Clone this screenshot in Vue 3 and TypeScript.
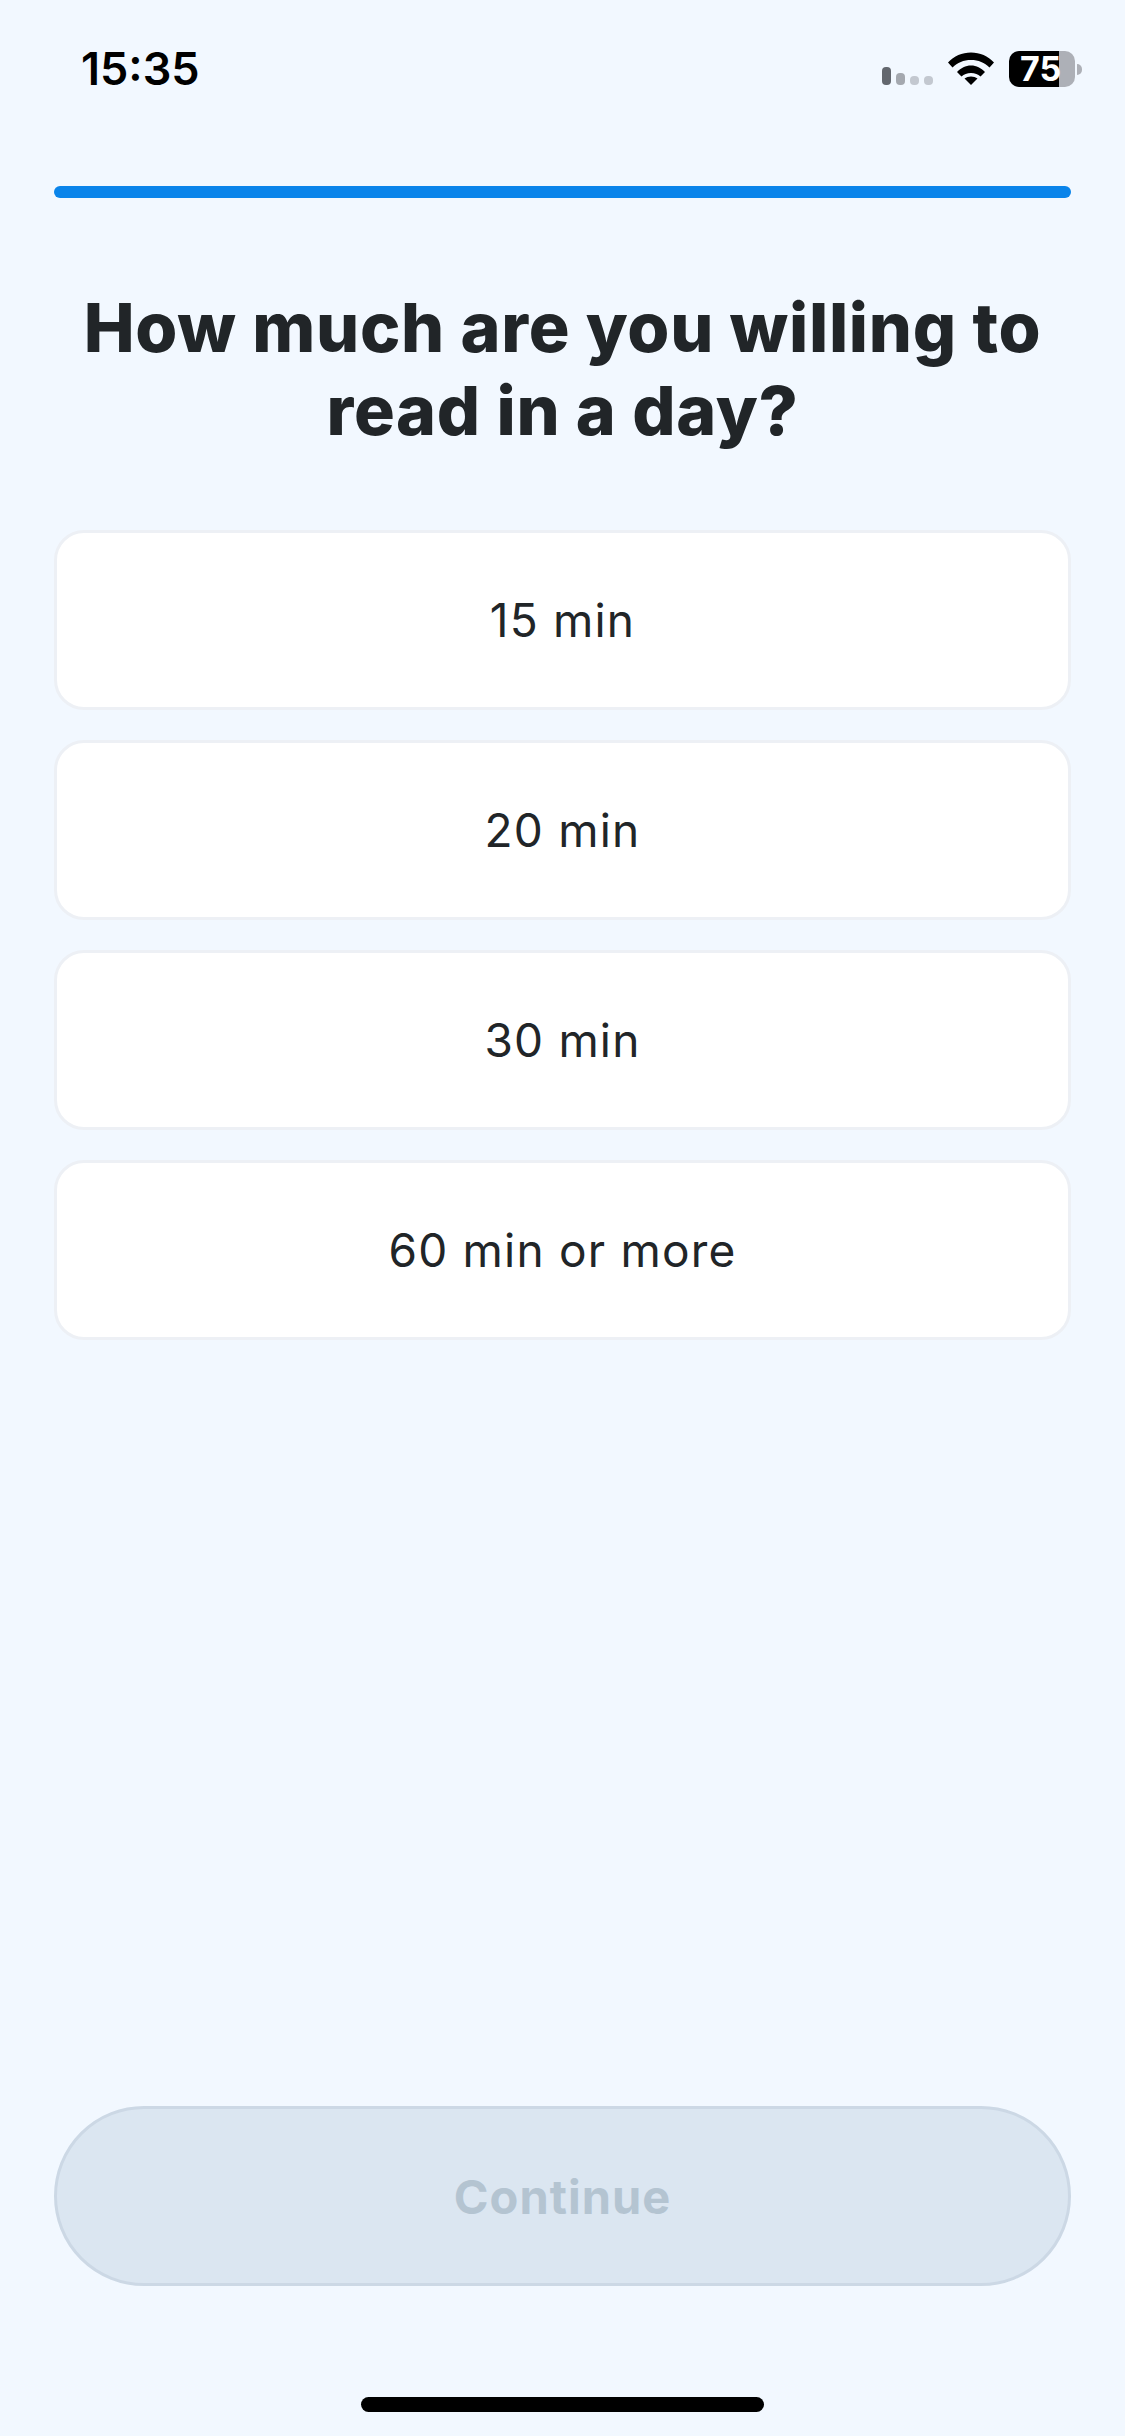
<script setup lang="ts">
const options = ["15 min", "20 min", "30 min", "60 min or more"];
</script>

<template>
  <div class="screen">
    <header class="status-bar">
      <span class="time">15:35</span>
      <div class="status-icons">
        <svg class="signal" width="51" height="18" viewBox="0 0 51 18">
          <rect x="0" y="0" width="9" height="18" rx="4" fill="#63676e" />
          <rect x="14" y="6" width="9" height="12" rx="4" fill="#a4a8af" />
          <rect x="28" y="9" width="9" height="9" rx="4" fill="#c3c8d0" />
          <rect x="42" y="9" width="9" height="9" rx="4" fill="#c3c8d0" />
        </svg>
        <svg class="wifi" width="46" height="33" viewBox="0 0 46 33">
          <path d="M0 10.500C6 4 14 0.500 23 0.500S40 4 46 10.500L41.500 15.500C36.500 10.500 30.500 8 23 8S9.500 10.500 4.500 15.500Z" fill="#000" />
          <path d="M9 20C13 16 17.500 13.500 23 13.500S33 16 37 20L32.500 24.500C30 22.300 27 21 23 21S16 22.300 13.500 24.500Z" fill="#000" />
          <path d="M16.500 26.500C18.300 25.200 20.500 24.500 23 24.500S27.700 25.200 29.500 26.500L23 33Z" fill="#000" />
        </svg>
        <div class="battery">
          <div class="battery-body">75</div>
          <span class="battery-nub"></span>
        </div>
      </div>
    </header>

    <main class="content">
      <div class="progress"></div>
      <h1 class="title">How much are you willing to read in a day?</h1>
      <div class="options">
        <button v-for="option in options" :key="option" class="option" type="button">
          {{ option }}
        </button>
      </div>
    </main>

    <footer class="footer">
      <button class="continue" type="button" disabled>Continue</button>
      <div class="home-bar"></div>
    </footer>
  </div>
</template>

<style>
html,
body {
  margin: 0;
  background: #f2f8ff;
}
</style>

<style scoped>
.screen {
  display: flex;
  flex-direction: column;
  height: 2436px;
  background: #f2f8ff;
  box-sizing: border-box;
  font-family: Inter, "Noto Sans", sans-serif;
}

.status-bar {
  display: flex;
  justify-content: space-between;
  align-items: flex-start;
  height: 186px;
  box-sizing: border-box;
  padding: 40px 43px 0 81px;
}

.time {
  margin-top: 2px;
  font-size: 45px;
  line-height: 54px;
  font-weight: 600;
  color: #000;
}

.status-icons {
  display: flex;
  align-items: flex-end;
  height: 45px;
}

.signal {
  display: block;
}

.wifi {
  display: block;
  margin-left: 15px;
}

.battery {
  display: flex;
  align-items: center;
  margin-left: 15px;
  margin-bottom: -2px;
}

.battery-body {
  width: 66px;
  height: 36px;
  border-radius: 10px;
  background: linear-gradient(to right, #000 50px, #adb0b7 50px);
  color: #fff;
  font-size: 34px;
  font-weight: 700;
  line-height: 36px;
  padding-left: 11px;
  box-sizing: border-box;
}

.battery-nub {
  width: 5px;
  height: 11px;
  margin-left: 2px;
  border-radius: 0 6px 6px 0;
  background: #adb0b7;
}

.content {
  flex: 1;
  padding: 0 54px;
}

.progress {
  height: 12px;
  border-radius: 6px;
  background: #0a84ea;
}

.title {
  margin: 88px 0 0;
  font-size: 68px;
  line-height: 83px;
  font-weight: 800;
  letter-spacing: 0.7px;
  text-align: center;
  color: #212528;
}

.options {
  display: flex;
  flex-direction: column;
  gap: 30px;
  margin-top: 78px;
}

.option {
  height: 180px;
  border: 3px solid #edf0f5;
  border-radius: 30px;
  background: #fff;
  font-family: inherit;
  font-size: 46px;
  font-weight: 400;
  letter-spacing: 1.2px;
  color: #212528;
  text-align: center;
}

.footer {
  display: flex;
  flex-direction: column;
  align-items: center;
  padding: 0 54px 24px;
}

.continue {
  width: 100%;
  height: 180px;
  border: 3px solid #ccd8e5;
  border-radius: 90px;
  background: #dbe6f1;
  font-family: inherit;
  font-size: 47px;
  font-weight: 700;
  letter-spacing: 1px;
  color: #b4c4d1;
}

.home-bar {
  width: 403px;
  height: 15px;
  margin-top: 111px;
  border-radius: 8px;
  background: #000;
}
</style>
